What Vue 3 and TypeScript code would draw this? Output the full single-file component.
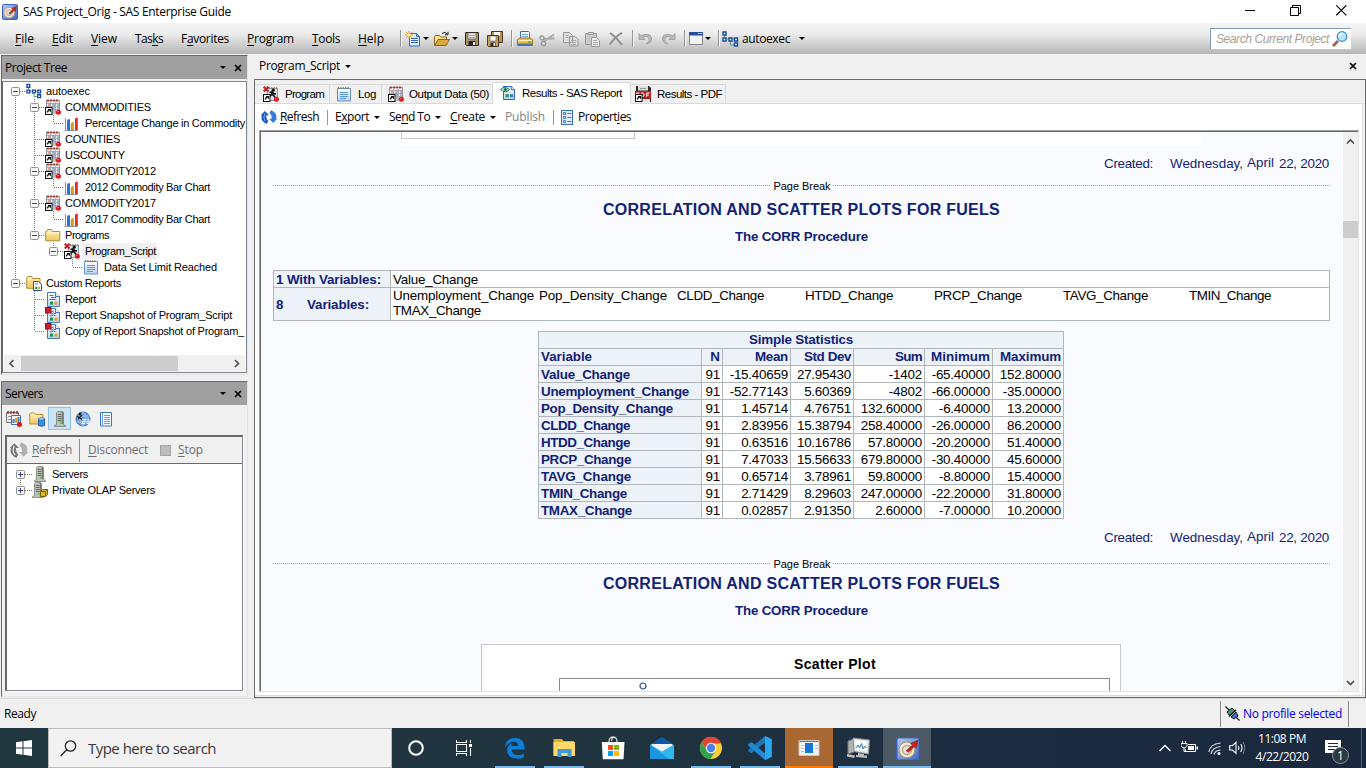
<script setup lang="ts">
interface TreeRow {
  guides: string[]
  icon: string
  text: string
  width: number
  selected?: boolean
}

/* Tracks a label so that it fills the given width in pixels. */
const vFit = {
  mounted(el: HTMLElement, binding: { value: number }) {
    const count = (el.textContent ?? '').trim().length
    const natural = el.getBoundingClientRect().width
    if (count > 1) el.style.letterSpacing = `${((binding.value - natural) / count).toFixed(3)}px`
  },
}

const menus = [
  { pre: '', key: 'F', post: 'ile', width: 19, cell: 37 },
  { pre: '', key: 'E', post: 'dit', width: 21, cell: 39 },
  { pre: '', key: 'V', post: 'iew', width: 26, cell: 44 },
  { pre: 'Tas', key: 'k', post: 's', width: 28, cell: 46 },
  { pre: 'F', key: 'a', post: 'vorites', width: 48, cell: 66 },
  { pre: '', key: 'P', post: 'rogram', width: 47, cell: 65 },
  { pre: '', key: 'T', post: 'ools', width: 28, cell: 46 },
  { pre: '', key: 'H', post: 'elp', width: 26, cell: 42 },
]

const tree: TreeRow[] = [
  { guides: ['first'], icon: 'proj', text: 'autoexec', width: 44 },
  { guides: ['v', 'teebox'], icon: 'table', text: 'COMMMODITIES', width: 86 },
  { guides: ['v', 'v', 'ell'], icon: 'chart', text: 'Percentage Change in Commodity', width: 160 },
  { guides: ['v', 'tee'], icon: 'table', text: 'COUNTIES', width: 55 },
  { guides: ['v', 'tee'], icon: 'table', text: 'USCOUNTY', width: 60 },
  { guides: ['v', 'teebox'], icon: 'table', text: 'COMMODITY2012', width: 91 },
  { guides: ['v', 'v', 'ell'], icon: 'chart', text: '2012 Commodity Bar Chart', width: 125 },
  { guides: ['v', 'teebox'], icon: 'table', text: 'COMMODITY2017', width: 91 },
  { guides: ['v', 'v', 'ell'], icon: 'chart', text: '2017 Commodity Bar Chart', width: 125 },
  { guides: ['v', 'ellbox'], icon: 'folder', text: 'Programs', width: 44 },
  { guides: ['v', 'none', 'ellbox'], icon: 'program', text: 'Program_Script', width: 71, selected: true },
  { guides: ['v', 'none', 'none', 'ell'], icon: 'note', text: 'Data Set Limit Reached', width: 113 },
  { guides: ['ellbox'], icon: 'folderreport', text: 'Custom Reports', width: 75 },
  { guides: ['none', 'tee'], icon: 'report', text: 'Report', width: 31 },
  { guides: ['none', 'tee'], icon: 'snap', text: 'Report Snapshot of Program_Script', width: 167 },
  { guides: ['none', 'ell'], icon: 'snap', text: 'Copy of Report Snapshot of Program_', width: 179 },
]

const tabs = [
  { id: 'program', icon: 'program', text: 'Program', width: 39 },
  { id: 'log', icon: 'note', text: 'Log', width: 18 },
  { id: 'output', icon: 'table', text: 'Output Data (50)', width: 80 },
  { id: 'sas', icon: 'result', text: 'Results - SAS Report', width: 100 },
  { id: 'pdf', icon: 'pdf', text: 'Results - PDF', width: 65 },
]

const variables = [
  { text: 'Unemployment_Change', width: 141 },
  { text: 'Pop_Density_Change', width: 128 },
  { text: 'CLDD_Change', width: 87 },
  { text: 'HTDD_Change', width: 88 },
  { text: 'PRCP_Change', width: 88 },
  { text: 'TAVG_Change', width: 85 },
  { text: 'TMIN_Change', width: 82 },
  { text: 'TMAX_Change', width: 88 },
]

const statHeads = [
  { text: 'Variable', width: 51 },
  { text: 'N', width: 9 },
  { text: 'Mean', width: 33 },
  { text: 'Std Dev', width: 47 },
  { text: 'Sum', width: 27 },
  { text: 'Minimum', width: 59 },
  { text: 'Maximum', width: 61 },
]

const stats = [
  { name: 'Value_Change', width: 89, values: ['91', '-15.40659', '27.95430', '-1402', '-65.40000', '152.80000'] },
  { name: 'Unemployment_Change', width: 148, values: ['91', '-52.77143', '5.60369', '-4802', '-66.00000', '-35.00000'] },
  { name: 'Pop_Density_Change', width: 132, values: ['91', '1.45714', '4.76751', '132.60000', '-6.40000', '13.20000'] },
  { name: 'CLDD_Change', width: 89, values: ['91', '2.83956', '15.38794', '258.40000', '-26.00000', '86.20000'] },
  { name: 'HTDD_Change', width: 89, values: ['91', '0.63516', '10.16786', '57.80000', '-20.20000', '51.40000'] },
  { name: 'PRCP_Change', width: 90, values: ['91', '7.47033', '15.56633', '679.80000', '-30.40000', '45.60000'] },
  { name: 'TAVG_Change', width: 90, values: ['91', '0.65714', '3.78961', '59.80000', '-8.80000', '15.40000'] },
  { name: 'TMIN_Change', width: 86, values: ['91', '2.71429', '8.29603', '247.00000', '-22.20000', '31.80000'] },
  { name: 'TMAX_Change', width: 91, values: ['91', '0.02857', '2.91350', '2.60000', '-7.00000', '10.20000'] },
]

const apps = [
  { icon: 'edge', state: 'open' },
  { icon: 'explorer', state: 'open' },
  { icon: 'store', state: '' },
  { icon: 'mail', state: '' },
  { icon: 'chrome', state: 'open' },
  { icon: 'vscode', state: 'open' },
  { icon: 'window', state: 'alert' },
  { icon: 'monitor', state: 'open' },
  { icon: 'sasbig', state: 'current' },
]
</script>

<template>
  <div class="desktop">
    <svg class="defs" width="0" height="0">
      <defs>
        <linearGradient id="g-blue" x1="0" y1="0" x2="1" y2="1">
          <stop offset="0" stop-color="#b9cdf3" /><stop offset="1" stop-color="#3b63c4" />
        </linearGradient>
        <linearGradient id="g-fold" x1="0" y1="0" x2="0" y2="1">
          <stop offset="0" stop-color="#fff3bd" /><stop offset="1" stop-color="#f0c45a" />
        </linearGradient>
        <linearGradient id="g-edge" x1="0" y1="0" x2="0" y2="1">
          <stop offset="0" stop-color="#ffffff" /><stop offset="1" stop-color="#bcd2f4" />
        </linearGradient>
      </defs>
      <symbol id="i-sas" viewBox="0 0 16 16">
        <rect x=".5" y=".5" width="15" height="15" rx="1.5" fill="url(#g-blue)" stroke="#3d62b4" />
        <circle cx="7.3" cy="8.6" r="5.3" fill="#f3e9d5" stroke="#a68c62" stroke-width=".6" />
        <circle cx="7.3" cy="8.6" r="3" fill="#dde3ec" stroke="#c0a673" stroke-width="1" />
        <path d="M6.8 9.2 L10.9 5.4 L9.6 4.4 L14.6 2.2 L13.7 7.4 L12.4 6.4 L8.2 10.2Z" fill="#c4241d" stroke="#8b1a14" stroke-width=".4" />
      </symbol>
      <symbol id="i-proj" viewBox="0 0 17 16">
        <path d="M2.5 4v4h10M8.5 10v4h4" fill="none" stroke="#5a9b79" />
        <path d="M1 1h3v3H1zM1 7h3v3H1zM7 7h3v3H7zM12.500 7h3v3h-3zM12.500 12h3v3h-3z" fill="#fff" stroke="#174a9c" stroke-width="1.4" />
      </symbol>
      <symbol id="i-short" viewBox="0 0 16 16">
        <rect x=".5" y="8.5" width="6.5" height="7" fill="#fff" stroke="#111" />
        <path d="M2.3 13.5q0-2 2.2-2.2M3 10.5h2.4v2.3" fill="none" stroke="#111" stroke-width="1.2" />
      </symbol>
      <symbol id="i-table" viewBox="0 0 16 16">
        <rect x="1.5" y="1.5" width="13" height="12.5" fill="#f7f4f0" stroke="#9a8f8c" />
        <path d="M2 1.5h12" stroke="#a53b3b" stroke-width="2" stroke-dasharray="2 1" />
        <path d="M2 4.500h12M2 7.5h12M2 10.5h12M5.5 3v11M10.500 3v11" stroke="#aaa6a7" />
        <path d="M7 6h3M12 6h2M7 9h3M12 9h2M8 12h2" stroke="#4d79cc" stroke-width="1.2" />
        <path d="M3 6h2" stroke="#c34d45" />
        <use href="#i-short" />
        <circle cx="13.4" cy="13.3" r="2.5" fill="#d9181c" /><circle cx="12.8" cy="12.6" r=".7" fill="#ff8d86" />
      </symbol>
      <symbol id="i-chart" viewBox="0 0 16 16">
        <path d="M1.5 3v12.5M.5 15.5H14" fill="none" stroke="#8994a8" />
        <path d="M3 5.5l1-1.3h2V15H3z" fill="#2d6fdb" />
        <path d="M7 9l1-1.5h1.5V15H7z" fill="#d5a419" stroke="#a77800" stroke-width=".4" />
        <path d="M11 4l1-1.3h1.8V14.5L13 15h-2z" fill="#e02b20" />
      </symbol>
      <symbol id="i-folder" viewBox="0 0 16 16">
        <path d="M.7 4.5h.8l1-2h4l1 2h7.3v9.3H.7z" fill="url(#g-fold)" stroke="#b68a2d" />
        <path d="M2 6h12" stroke="#fff9df" />
      </symbol>
      <symbol id="i-folderreport" viewBox="0 0 16 16">
        <path d="M.7 3.5l1-2h4l1 2h7.3v9.8H.7z" fill="url(#g-fold)" stroke="#b68a2d" />
        <path d="M7.5 6.5h5l3 3v6h-8z" fill="#fff" stroke="#214da5" />
        <path d="M9 9h3" stroke="#5e89ce" /><path d="M9 13h2.3" stroke="#32a052" stroke-width="2.5" /><path d="M11.8 13h2.3" stroke="#d6aa22" stroke-width="2.5" />
      </symbol>
      <symbol id="i-report" viewBox="0 0 16 16">
        <path d="M2.5 1.5h8l4 4v10h-12z" fill="url(#g-edge)" stroke="#4675c8" />
        <path d="M10.5 1.5v4h4" fill="#fff" stroke="#4675c8" />
        <path d="M4.500 4.500h4M6 6.5h5M4.500 8.500h6" stroke="#4675ad" />
        <path d="M5 12.2h3" stroke="#199445" stroke-width="3" /><path d="M9.5 12.2h3" stroke="#d8a321" stroke-width="3" />
      </symbol>
      <symbol id="i-snap" viewBox="0 0 16 16">
        <use href="#i-report" />
        <path d="M6 3v7M8.5 3v6" stroke="#aab8d3" stroke-width="1.5" />
        <rect x=".5" y=".5" width="5.5" height="5.5" fill="#c7222b" stroke="#9d111b" />
      </symbol>
      <symbol id="i-note" viewBox="0 0 16 16">
        <path d="M1.5 2.5h13v12.5h-13z" fill="url(#g-edge)" stroke="#5f91cf" />
        <path d="M2 2h12" stroke="#827c4c" stroke-width="2" stroke-dasharray="1 1.4" />
        <path d="M4 6.5h8M4 8.5h8M4 10.5h8M4 12.5h6" stroke="#5996da" />
      </symbol>
      <symbol id="i-program" viewBox="0 0 16 16">
        <path d="M4.5 2.5h10v12h-10z" fill="#dbe7f5" stroke="#8b98a7" />
        <path d="M6 2h9" stroke="#858044" stroke-width="2" stroke-dasharray="1 1.4" />
        <circle cx="10.2" cy="4.2" r="1.6" fill="#111" />
        <path d="M9.5 5.5L8.3 9l-2 1.5M9.2 8.3l2.3 2.2 1 2.5M6.5 6.5l2.5-.7 2 2 2 .1" stroke="#111" stroke-width="1.6" fill="none" />
        <path d="M.7.7l4.8 4.8M5.5.7L.7 5.5" stroke="#c22020" stroke-width="2.1" />
        <use href="#i-short" />
        <circle cx="13.4" cy="13.3" r="2.5" fill="#d9181c" /><circle cx="12.8" cy="12.6" r=".7" fill="#ff8d86" />
      </symbol>
      <symbol id="i-result" viewBox="0 0 16 16">
        <path d="M3.5 1.5h8l3 3v10h-11z" fill="url(#g-edge)" stroke="#2d65c7" />
        <path d="M11.3 1.5v3.2h3.2" fill="#fff" stroke="#2d65c7" />
        <path d="M.5 4.5q4-4 9 0q-4 4.5-9 0z" fill="#d8efdf" stroke="#1d794f" /><circle cx="5.3" cy="4.5" r="1.6" fill="#187c5c" />
        <path d="M5.5 10.7h3.3" stroke="#2d9e47" stroke-width="3.2" /><path d="M10 10.7h3" stroke="#3373cb" stroke-width="3" />
      </symbol>
      <symbol id="i-pdf" viewBox="0 0 16 16">
        <path d="M1 0h13l2 2V16H1z" fill="#29292b" />
        <path d="M3 0h10v4.500H3z" fill="#e1e1e1" /><path d="M5 2.500h6" stroke="#999" />
        <path d="M0 5h16v7.500H0z" fill="#d9141b" />
        <path d="M1.700 11V7h2q1 1.100 0 2.200h-2M6.600 7v3.500h1.600q2-1.700 0-3.500zM11.500 11V7h3M11.500 9h2.300" fill="none" stroke="#fff" stroke-width="1" />
        <path d="M7 13h8v3H7z" fill="#ddd" />
        <use href="#i-short" />
      </symbol>
      <symbol id="i-refresh" viewBox="0 0 16 16">
        <path d="M5.600 15Q-.9 12 .9 6.300H-.3L3.900 2L8 6.300H5.400Q4.800 9.800 7.300 12z" fill="#1c55b8" />
        <path d="M10 1.200Q16.900 4 15.100 9.700H16.300L12.100 14L8 9.700H10.600Q11.200 6.200 8.400 4z" fill="#347fd6" />
        <path d="M3.800 4.500Q1.500 9 4.500 12.500" stroke="#77aff0" fill="none" />
      </symbol>
      <symbol id="i-props" viewBox="0 0 12 15">
        <rect x=".5" y=".5" width="11" height="14" fill="#dfeafb" stroke="#376db9" />
        <path d="M2.5 2.500h2v2h-2zM2.5 6.500h2v2h-2zM2.5 10.500h2v2h-2z" fill="#fff" stroke="#2959ac" stroke-width=".8" />
        <path d="M6.300 3.500h4M6.300 7.500h4M6.300 11.500h4" stroke="#3974c4" />
      </symbol>
      <symbol id="i-server" viewBox="0 0 16 16">
        <path d="M4.5 1.5l1-1h5l1 1v12l2 1v1h-11v-1l2-1z" fill="#bfc2ba" stroke="#787c74" stroke-width=".8" />
        <path d="M5.8 3.500h3.7M5.8 5.500h3.7M5.8 7.500h3.7M5.8 9.500h3.7" stroke="#5c6559" /><path d="M10.500 1v12" stroke="#73796f" stroke-width="1.4" />
        <circle cx="8.7" cy="11.8" r=".9" fill="#34c33b" />
      </symbol>
      <symbol id="i-olap" viewBox="0 0 16 16">
        <g transform="translate(-2 0)"><use href="#i-server" /></g>
        <path d="M8.500 9.500l2-2h5v5l-2 2h-5z" fill="#e0b81e" stroke="#71620b" /><path d="M8.500 9.500h5v5M13.500 9.500l2-2" stroke="#4a7b27" fill="none" />
      </symbol>
    </svg>

    <header class="titlebar">
      <svg class="app-icon"><use href="#i-sas" /></svg>
      <span v-fit="208" class="fit">SAS Project_Orig - SAS Enterprise Guide</span>
      <div class="win-controls">
        <svg viewBox="0 0 11 11"><path d="M0 5.5h10" stroke="#000" /></svg>
        <svg viewBox="0 0 11 11"><path d="M.5 2.5h8v8h-8zM2.5 2.5v-2h8v8h-2" fill="none" stroke="#000" /></svg>
        <svg viewBox="0 0 11 11"><path d="M.3.3l10 10M10.3.3l-10 10" stroke="#000" stroke-width="1.1" /></svg>
      </div>
    </header>

    <div class="menubar">
      <nav class="menus">
        <div v-for="m in menus" :key="m.key + m.post" class="menu" :style="{ width: m.cell + 'px' }">
          <span v-fit="m.width" class="fit">{{ m.pre }}<u>{{ m.key }}</u>{{ m.post }}</span>
        </div>
      </nav>
      <div class="tools">
        <i class="sep" />
        <svg class="t-new" viewBox="0 0 16 16">
          <path d="M4.5 2.5h7l3 3v9.500h-10z" fill="#dfecfc" stroke="#3569bb" /><path d="M11.500 2.500v3h3M6 7.500h7M6 9.500h7M6 11.500h7" fill="none" stroke="#3569bb" />
          <path d="M4 0v8M0 4h8M1 1l6 6M7 1L1 7" stroke="#f09a27" /><circle cx="4" cy="4" r="1.600" fill="#fff4a5" />
        </svg>
        <b class="arrow" />
        <svg class="t-open" viewBox="0 0 16 16">
          <path d="M.5 14.500v-9l1-1h4l1 1.500h6v3" fill="#ffe695" stroke="#8a651b" /><path d="M.7 14.500l3.300-6h11.500l-3.500 6z" fill="#dda83c" stroke="#8a651b" />
          <path d="M8 2.500q3-2.500 5.500.5M14 .8v3h-3" fill="none" stroke="#222" />
        </svg>
        <b class="arrow" />
        <svg class="t-save" viewBox="0 0 14 14">
          <path d="M.5.5h13v13H1.500l-1-1z" fill="#a9946f" stroke="#2c261f" /><path d="M3 1h8v6H3z" fill="#f7f7f7" stroke="#4b4338" stroke-width=".6" /><path d="M4 3.500h6M4 5.500h6" stroke="#999" /><path d="M3.500 9h7v4.500h-7z" fill="#282421" /><path d="M8 10h2v3H8z" fill="#eee" />
        </svg>
        <svg class="t-saveall" viewBox="0 0 16 16">
          <path d="M4.500.5h11v11h-11z" fill="#b79450" stroke="#453721" /><path d="M7 1h6v4H7z" fill="#fff" /><path d="M.5 4.500h11v11h-10l-1-1z" fill="#c4a265" stroke="#453721" /><path d="M3 5h6v5H3z" fill="#fff" stroke="#453721" stroke-width=".5" /><path d="M3.500 11.500h5v4h-5z" fill="#332b20" /><path d="M6.500 12h1.500v3H6.500z" fill="#eee" />
        </svg>
        <i class="sep s-print" />
        <svg class="t-print" viewBox="0 0 16 16">
          <path d="M3.500 8V.5h8l1 1V8" fill="#f3f8ff" stroke="#3c6bb8" /><path d="M5 3.500h6M5 5.500h6" stroke="#77a2de" /><path d="M.5 9l2-2h11l2 2v5.500H.5z" fill="#e9bd48" stroke="#9c742a" /><path d="M1 9.500h14" stroke="#fff0a5" /><path d="M1 12.500h14v2H1z" fill="#4371b6" /><path d="M11 11h3" stroke="#289c32" />
        </svg>
        <svg class="t-cut" viewBox="0 0 16 16">
          <path d="M15 3.500L5.500 10M15.500 7.500L5 8" stroke="#aaa" stroke-width="2" /><circle cx="3" cy="7" r="2" fill="none" stroke="#999" stroke-width="1.300" /><circle cx="4.500" cy="12.500" r="2.200" fill="none" stroke="#999" stroke-width="1.300" />
        </svg>
        <svg class="t-copy" viewBox="0 0 16 16">
          <path d="M.5 1.500h6l3 3v7h-9zM6.500 5.500h5.500l3 3v6.500H6.500z" fill="#ddd" stroke="#999" /><path d="M2.500 4.500h3M2.500 6.500h3M8 9.500h5M8 11.500h5M8 13.500h5" stroke="#aaa" />
        </svg>
        <svg class="t-paste" viewBox="0 0 16 16">
          <path d="M.5 2.500h11v11H.5z" fill="#c9c9c9" stroke="#999" /><path d="M3.500 3.500v-2h5v2z" fill="#ddd" stroke="#999" /><path d="M6.500 6.500h5l3 3v6h-8z" fill="#eee" stroke="#999" /><path d="M8 9.500h4M8 11.500h5M8 13.500h5" stroke="#aaa" />
        </svg>
        <svg class="t-del" viewBox="0 0 14 14"><path d="M1 1q6 4 12 12M13 .7Q6 5 .7 12.500" fill="none" stroke="#8f8f8f" stroke-width="2" /></svg>
        <i class="sep s-undo" />
        <svg class="t-undo" viewBox="0 0 16 14"><path d="M1 1.500v6h6L4.900 5.500Q10 3 11 6.500T8 12q6-1 5.500-6Q12 0 3.200 3.700z" fill="#bbb" stroke="#999" stroke-width=".8" /></svg>
        <svg class="t-redo" viewBox="0 0 16 14"><path d="M15 1.500v6H9L11.100 5.500Q6 3 5 6.500T8 12q-6-1-5.500-6Q4 0 12.800 3.700z" fill="#bbb" stroke="#999" stroke-width=".8" /></svg>
        <i class="sep s-win" />
        <svg class="t-win" viewBox="0 0 14 14"><path d="M.5.5h13v12H.5z" fill="#f3f3f3" stroke="#888" /><path d="M0 0h14v3.500H0z" fill="#284e9b" /><path d="M9 1.500h4" stroke="#fff" stroke-dasharray="1 .5" /></svg>
        <b class="arrow" />
        <i class="sep s-proj" />
        <svg class="t-proj"><use href="#i-proj" /></svg>
        <span v-fit="48" class="fit">autoexec</span>
        <b class="arrow a-last" />
      </div>
      <div class="search">
        <em v-fit="113" class="fit">Search Current Project</em>
        <svg viewBox="0 0 16 16"><path d="M1 15l5-5" stroke="#a55d48" stroke-width="2.700" /><circle cx="10" cy="5.500" r="4.800" fill="#b9e4fb" stroke="#4b8bd5" stroke-width="1.300" /><path d="M7 5q1-3 4-2.500" stroke="#fff" stroke-width="1.400" fill="none" /></svg>
      </div>
    </div>

    <main class="main">
      <aside class="side">
        <section class="pane project">
          <div class="pane-head"><span v-fit="62" class="fit">Project Tree</span><b class="arrow" /><svg class="x" viewBox="0 0 8 8"><path d="M1 1l6 6M7 1L1 7" stroke="#000" stroke-width="1.700" /></svg></div>
          <div class="tree-box">
            <div class="tree">
              <div v-for="row in tree" :key="row.text" class="row">
                <svg v-for="(g, i) in row.guides" :key="i" class="guide" viewBox="0 0 19 16">
                  <g fill="none" stroke="#777" stroke-dasharray="1 1">
                    <path v-if="g === 'v' || g === 'tee' || g === 'teebox'" d="M9.500 0v16" />
                    <path v-if="g === 'ell' || g === 'ellbox'" d="M9.500 0v8" />
                    <path v-if="g === 'first'" d="M9.500 8v8" />
                    <path v-if="g !== 'v' && g !== 'none'" d="M10 8.500h9" />
                  </g>
                  <g v-if="g.endsWith('box') || g === 'first'">
                    <rect x="5.500" y="4.500" width="8" height="8" rx="1" fill="#f6f6f6" stroke="#919191" /><path d="M7 8.500h5" stroke="#31479b" />
                  </g>
                </svg>
                <svg class="node"><use :href="'#i-' + row.icon" /></svg>
                <span class="label" :class="{ selected: row.selected, deep: row.guides.length > 2 }"><span v-fit="row.width" class="fit">{{ row.text }}</span></span>
              </div>
            </div>
            <div class="hscroll">
              <svg viewBox="0 0 8 9"><path d="M5.500 1L2 4.500L5.500 8" fill="none" stroke="#505050" stroke-width="1.700" /></svg>
              <div class="thumb" />
              <svg class="right" viewBox="0 0 8 9"><path d="M2 1l3.500 3.500L2 8" fill="none" stroke="#505050" stroke-width="1.700" /></svg>
            </div>
          </div>
        </section>

        <section class="pane servers">
          <div class="pane-head"><span v-fit="38" class="fit">Servers</span><b class="arrow" /><svg class="x" viewBox="0 0 8 8"><path d="M1 1l6 6M7 1L1 7" stroke="#000" stroke-width="1.700" /></svg></div>
          <div class="server-icons">
            <div><svg viewBox="0 0 16 16"><path d="M.5 1.500h12v10H.5z" fill="#eee" stroke="#777" /><path d="M1 1.500h11" stroke="#a43434" stroke-width="2.400" stroke-dasharray="2 1" /><path d="M2 5.500h3M2 8.500h3" stroke="#999" /><path d="M5.500 4.500h9v9h-9z" fill="#fff" stroke="#466eb6" /><path d="M7.500 12V8M12.500 12V6" stroke="#347bd2" stroke-width="2" /><path d="M10 12V7" stroke="#dc9c2a" stroke-width="2" /><circle cx="13.500" cy="13.500" r="2.500" fill="#d8181c" /></svg></div>
            <div><svg viewBox="0 0 16 16"><path d="M.7 13V3l1-1h4l1 1.500h7.300v9.500z" fill="url(#g-fold)" stroke="#bd9031" /><path d="M9.500 8v6.500q3 1.500 6 0V8z" fill="#3c91e0" stroke="#1b5eb2" /><ellipse cx="12.500" cy="8" rx="3" ry="1.300" fill="#a9d9fa" stroke="#1b5eb2" stroke-width=".7" /></svg></div>
            <div class="on"><svg><use href="#i-server" /></svg></div>
            <div><svg viewBox="0 0 16 16"><circle cx="8" cy="8" r="7" fill="#6f9fe0" stroke="#3672bc" /><path d="M1.500 5h13M1.500 11h13M8 1q-6 7 0 14M8 1q6 7 0 14" fill="none" stroke="#b9d5f5" stroke-width=".7" /><circle cx="5" cy="3" r="1.500" fill="#222" /><path d="M2 5l5 3.500M7 4L3 8" stroke="#222" stroke-width="1.200" /><path d="M7.500 8.500H10v2H7.500v2H10M11.500 8.500H14v4h-2.500M11.500 10.500h2" fill="none" stroke="#fff" /></svg></div>
            <div><svg viewBox="0 0 16 16"><path d="M2.500 1.500h11v13.500h-11z" fill="#f4f9ff" stroke="#3c75c4" /><path d="M4.500 2v13M6 4.500h6M6 6.500h6M6 8.500h6M6 10.500h6M6 12.500h6" stroke="#6c9edd" /></svg></div>
          </div>
          <div class="server-box">
            <div class="server-tools">
              <svg class="gray-refresh"><use href="#i-refresh" /></svg>
              <span v-fit="40" class="fit"><u>R</u>efresh</span><i />
              <span v-fit="60" class="fit"><u>D</u>isconnect</span>
              <b class="stop" /><span v-fit="25" class="fit"><u>S</u>top</span>
            </div>
            <div class="server-tree">
              <div class="srow"><svg class="plus" viewBox="0 0 18 16"><path d="M5.500 12v4M10 8.500h7" fill="none" stroke="#777" stroke-dasharray="1 1" /><rect x="1.500" y="4.500" width="8" height="8" rx="1" fill="#f6f6f6" stroke="#919191" /><path d="M3 8.500h5M5.500 6v5" stroke="#31479b" /></svg><svg class="node"><use href="#i-server" /></svg><span v-fit="36" class="fit">Servers</span></div>
              <div class="srow"><svg class="plus" viewBox="0 0 18 16"><path d="M5.500 0v4M10 8.500h7" fill="none" stroke="#777" stroke-dasharray="1 1" /><rect x="1.500" y="4.500" width="8" height="8" rx="1" fill="#f6f6f6" stroke="#919191" /><path d="M3 8.500h5M5.500 6v5" stroke="#31479b" /></svg><svg class="node"><use href="#i-olap" /></svg><span v-fit="103" class="fit">Private OLAP Servers</span></div>
            </div>
          </div>
        </section>
      </aside>

      <section class="work">
        <div class="work-head"><span v-fit="81" class="fit">Program_Script</span><b class="arrow" /><svg class="x" viewBox="0 0 8 8"><path d="M1 1l6 6M7 1L1 7" stroke="#000" stroke-width="1.700" /></svg></div>
        <div class="doc">
          <div class="tabs">
            <div v-for="t in tabs" :key="t.id" class="tab" :class="t.id"><svg><use :href="'#i-' + t.icon" /></svg><span v-fit="t.width" class="fit">{{ t.text }}</span></div>
            <div class="tab-rest" />
          </div>
          <div class="panel">
            <div class="panel-tools">
              <svg class="p-refresh"><use href="#i-refresh" /></svg>
              <span v-fit="39" class="fit"><u>R</u>efresh</span><i class="psep" />
              <span v-fit="34" class="fit">E<u>x</u>port</span><b class="arrow" />
              <span v-fit="41" class="fit">Se<u>n</u>d To</span><b class="arrow" />
              <span v-fit="35" class="fit"><u>C</u>reate</span><b class="arrow" />
              <span v-fit="40" class="fit off">Pub<u>l</u>ish</span><i class="psep" />
              <svg class="p-props"><use href="#i-props" /></svg>
              <span v-fit="53" class="fit">Propert<u>i</u>es</span>
            </div>
            <div class="viewer">
              <div class="report">
                <div class="remnant"><div /></div>
                <div class="created"><span v-fit="49" class="fit">Created:</span><span v-fit="73" class="fit day">Wednesday,</span><span v-fit="27" class="fit april">April</span><span v-fit="50" class="fit">22, 2020</span></div>
                <div class="break"><span v-fit="57" class="fit">Page Break</span></div>
                <h1 class="first"><span v-fit="397" class="fit">CORRELATION AND SCATTER PLOTS FOR FUELS</span></h1>
                <h2><span v-fit="133" class="fit">The CORR Procedure</span></h2>
                <table class="vars">
                  <colgroup><col class="c-head"><col></colgroup>
                  <tbody>
                    <tr class="low"><th><span v-fit="105" class="fit">1 With Variables:</span></th><td><span v-fit="85" class="fit">Value_Change</span></td></tr>
                    <tr class="tall"><th><span class="eight">8</span><span v-fit="62" class="fit">Variables:</span></th><td><div class="var-grid"><span v-for="v in variables" :key="v.text"><span v-fit="v.width" class="fit">{{ v.text }}</span></span></div></td></tr>
                  </tbody>
                </table>
                <table class="stats">
                  <colgroup><col class="w163"><col class="w21"><col class="w68"><col class="w63"><col class="w71"><col class="w68"><col class="w71"></colgroup>
                  <tbody>
                    <tr><th colspan="7" class="mid"><span v-fit="104" class="fit">Simple Statistics</span></th></tr>
                    <tr class="heads"><th v-for="h in statHeads" :key="h.text"><span v-fit="h.width" class="fit">{{ h.text }}</span></th></tr>
                    <tr v-for="s in stats" :key="s.name" class="low"><th><span v-fit="s.width" class="fit">{{ s.name }}</span></th><td v-for="(v, i) in s.values" :key="i">{{ v }}</td></tr>
                  </tbody>
                </table>
                <div class="created"><span v-fit="49" class="fit">Created:</span><span v-fit="73" class="fit day">Wednesday,</span><span v-fit="27" class="fit april">April</span><span v-fit="50" class="fit">22, 2020</span></div>
                <div class="break second"><span v-fit="57" class="fit">Page Break</span></div>
                <h1><span v-fit="397" class="fit">CORRELATION AND SCATTER PLOTS FOR FUELS</span></h1>
                <h2><span v-fit="133" class="fit">The CORR Procedure</span></h2>
                <div class="plot">
                  <h3><span v-fit="82" class="fit">Scatter Plot</span></h3>
                  <div class="plot-area"><svg viewBox="0 0 8 8"><circle cx="4" cy="4" r="3" fill="none" stroke="#2a4a8c" stroke-width="1.200" /></svg></div>
                </div>
              </div>
              <div class="vscroll">
                <svg viewBox="0 0 9 8"><path d="M1 5.500L4.500 2L8 5.500" fill="none" stroke="#505050" stroke-width="1.700" /></svg>
                <div class="thumb" />
                <svg class="down" viewBox="0 0 9 8"><path d="M1 2l3.500 3.500L8 2" fill="none" stroke="#505050" stroke-width="1.700" /></svg>
              </div>
            </div>
          </div>
        </div>
      </section>
    </main>

    <footer class="status">
      <span v-fit="32" class="fit">Ready</span>
      <div class="profile">
        <svg viewBox="0 0 15 15"><path d="M.5.500l4 4M11 11l3.500 3.500" stroke="#111" stroke-width="1.200" /><path d="M2 6l5-4 3 3-5 5z" fill="#3e9c7c" stroke="#111" /><path d="M6 11l5-5 2 4-4 3z" fill="#3e6fc4" stroke="#111" /><path d="M4 10.500L11 4" stroke="#111" stroke-width="1.500" /></svg>
        <span v-fit="99" class="fit">No profile selected</span>
      </div>
    </footer>

    <div class="taskbar">
      <div class="start"><svg viewBox="0 0 16 16"><path d="M0 2.300L6.500 1.300V7.500H0zM7.500 1.200L16 0V7.500H7.500zM0 8.500h6.500v6.200L0 13.800zM7.500 8.500H16V16L7.500 14.800z" fill="#fff" /></svg></div>
      <div class="type-here"><svg viewBox="0 0 17 17"><circle cx="10.500" cy="6" r="5.200" fill="none" stroke="#222" stroke-width="1.300" /><path d="M6.700 9.800L.6 16" stroke="#222" stroke-width="1.300" /></svg><span v-fit="128" class="fit">Type here to search</span></div>
      <div class="round"><svg viewBox="0 0 18 18"><circle cx="9" cy="9" r="6.800" fill="none" stroke="#fff" stroke-width="2" /></svg></div>
      <div class="taskview"><svg viewBox="0 0 17 16"><path d="M.5 0v2.500h10V0M.5 16v-2.500h10V16M.5 4.500h10v7H.5zM14.500 0v3M14.500 8v8" fill="none" stroke="#fff" stroke-width="1.100" /><path d="M13 4h3v3h-3z" fill="#fff" /></svg></div>
      <div class="apps">
        <div v-for="a in apps" :key="a.icon" class="app" :class="a.state">
          <svg v-if="a.icon === 'edge'" viewBox="0 0 24 24"><path d="M2 11.500Q3.500 1.500 12.500 1.700Q22 2.500 21.800 13.500H8.400Q9 19 15 19q3 0 5.800-1.600v4Q17.500 23 14.500 22.800Q4.500 22.500 4 14Q4.200 9.500 9 7.300Q8.300 9 8.300 10h6.900q0-4-4.200-4.200Q5.500 5.800 2 11.500z" fill="#0b7edb" /></svg>
          <svg v-else-if="a.icon === 'explorer'" viewBox="0 0 24 24"><path d="M1.500 3h8.500l1.500 2H22v14H1.500z" fill="#e9ab24" /><path d="M1.500 6H23v14H1.500z" fill="#ffd869" /><path d="M5.500 21v-8h14v8h-4v-4h-6v4z" fill="#409ad7" /></svg>
          <svg v-else-if="a.icon === 'store'" viewBox="0 0 24 24"><path d="M8 7q-.5-6 4-6t4 6M10.500 5q.5-5 4-3" fill="none" stroke="#ddd" stroke-width="1.300" /><path d="M.8 6h22.700l-1 17.200H1.800z" fill="#fff" /><path d="M7 9h5v5H7z" fill="#f25022" /><path d="M13 9h5v5h-5z" fill="#7fba00" /><path d="M7 15h5v5H7z" fill="#00a4ef" /><path d="M13 15h5v5h-5z" fill="#ffb900" /></svg>
          <svg v-else-if="a.icon === 'mail'" viewBox="0 0 24 24"><path d="M0 8.500L12 1l12 7.500z" fill="#0e5aa7" /><path d="M1.500 8h21v8h-21z" fill="#f0f4f8" /><path d="M0 8.500l12 7L24 8.500V23H0z" fill="#30b8ee" /><path d="M0 8.500L19 23H0z" fill="#1b95df" /></svg>
          <svg v-else-if="a.icon === 'chrome'" viewBox="0 0 24 24"><circle cx="12" cy="12" r="11" fill="#f9cf38" /><path d="M2.500 6.500A11 11 0 0 1 22.200 7.500H12L8 14z" fill="#e34335" /><path d="M2.500 6.500A11 11 0 0 0 11.500 23L16.500 14.500H8z" fill="#31a350" /><circle cx="12" cy="12" r="5.200" fill="#fff" /><circle cx="12" cy="12" r="4.200" fill="#4b82ee" /></svg>
          <svg v-else-if="a.icon === 'vscode'" viewBox="0 0 24 24"><path d="M17 0v6.500L3.500 17.300L.2 15.200V14z" fill="#1d78b8" /><path d="M.2 8l3.300-2L17 17.500V24L.2 9.500z" fill="#1e8cd4" /><path d="M17 0l6.800 3v18L17 24z" fill="#27a8f0" /></svg>
          <svg v-else-if="a.icon === 'window'" viewBox="0 0 24 24"><path d="M2 4.500h20v15H2z" fill="#f2f2f2" stroke="#c7c7c7" /><path d="M2.500 5.500h19" stroke="#777" stroke-width="1" /><path d="M8 7h8v10H8z" fill="#1676d5" /><path d="M4 9.500h3M4 12.500h3M4 15.500h3M18 9.500h3M18 12.500h3" stroke="#c4c4c4" /></svg>
          <svg v-else-if="a.icon === 'monitor'" viewBox="0 0 24 24"><path d="M2 5l6-2v13l-6 2z" fill="#aeb3b3" stroke="#777" /><path d="M7 2l16.500 2-1 14L8 15.500z" fill="#dfe2e2" stroke="#8b9192" /><path d="M9 4l12.500 1.500-.8 10L10 14z" fill="#fff" /><path d="M10 12l2-3 1.500 3 2-4.500 1.500 5.500 2-3 1.500 2" fill="none" stroke="#2b77af" /><path d="M12 17l6 1v1.500h3V22l-11-1v-2h2z" fill="#b8bcbc" /><path d="M1 18l8 1.500-1 2.500-7-1.500z" fill="#bdc0c0" /></svg>
          <svg v-else viewBox="0 0 24 24"><svg x="1" y="1" width="22" height="22"><use href="#i-sas" /></svg></svg>
        </div>
      </div>
      <div class="tray">
        <svg class="chev" viewBox="0 0 12 8"><path d="M.5 7L6 1.500L11.500 7" fill="none" stroke="#fff" stroke-width="1.300" /></svg>
        <svg class="batt" viewBox="0 0 17 14"><path d="M7 3.500h7.500v7H4.500V8M1.500 0v2M4.500 0v2M0 2.500h6v2q-1 2.500-3 2.500t-3-2.500zM3 7v3.500h2" fill="none" stroke="#fff" stroke-width="1" /><path d="M7 5h6v4H7zM15.500 5.500h1.500v3h-1.500z" fill="#fff" /></svg>
        <svg class="wifi" viewBox="0 0 13 13"><path d="M.8 10Q2 2 12.500 1M3 12Q4 5.500 12.500 4.500M6 12.500Q7 8.500 12.500 8" fill="none" stroke="#ddd" stroke-width="1.200" /><circle cx="11" cy="11.500" r="1.500" fill="#fff" /></svg>
        <svg class="vol" viewBox="0 0 17 14"><path d="M.7 4.700h2.700L7 1.300v11L3.400 9H.7zM9.300 5q1.300 1.800 0 4M11.700 3q2.500 3.500 0 8" fill="none" stroke="#fff" stroke-width="1.100" /><path d="M14 1q3.500 5 0 12" fill="none" stroke="#7b8794" /></svg>
        <div class="clock"><span v-fit="48" class="fit">11:08 PM</span><span v-fit="53" class="fit">4/22/2020</span></div>
        <div class="notice"><svg viewBox="0 0 17 16"><path d="M0 0h16v13h-5l-3 3v-3H0z" fill="#fff" /><path d="M3 3.500h10M3 6.500h10M3 9.500h7" stroke="#1b2a3e" /></svg><span class="badge">1</span></div>
        <i class="show-desktop" />
      </div>
    </div>
  </div>
</template>

<style>
body { margin: 0; overflow: hidden; }
</style>

<style scoped>
.desktop { width: 1366px; height: 768px; overflow: hidden; display: flex; flex-direction: column; background: #f0f0f0; color: #000; font: 12px/16px "Open Sans", "Noto Sans", sans-serif; }
.desktop, .desktop * { box-sizing: border-box; }
.defs { position: absolute; }
svg { display: block; flex: none; }
.fit { display: inline-block; flex: none; white-space: pre; }
u { text-decoration: underline; text-underline-offset: 2px; text-decoration-thickness: 1px; text-decoration-skip-ink: none; }
.arrow { flex: none; width: 0; height: 0; border: 3px solid transparent; border-top-color: #000; border-bottom: 0; }
.x { width: 8px; height: 8px; }

.titlebar { height: 23px; flex: none; background: #fff; display: flex; align-items: center; padding-left: 2px; }
.app-icon { width: 16px; height: 16px; margin-right: 5px; }
.win-controls { margin-left: auto; display: flex; gap: 35px; padding-right: 19px; margin-top: -3px; }
.win-controls svg { width: 11px; height: 11px; }
.win-controls svg:first-child { margin-right: -1px; }

.menubar { height: 31px; flex: none; display: flex; background: linear-gradient(#f4f4f4, #ececec 35%, #b6b6b6); align-items: center; }
.menus { display: flex; padding-left: 15px; width: 400px; }
.menu { flex: none; }
.tools { display: flex; align-items: center; height: 31px; }
.tools svg { width: 16px; height: 16px; }
.sep { width: 1px; height: 17px; background: #979797; box-shadow: 1px 0 #f5f5f5; }
.tools .t-new { margin: 0 2px 0 4px; }
.tools .t-open { margin: 0 2px 0 5px; }
.tools .t-save { width: 14px; height: 14px; margin-left: 7px; }
.tools .t-saveall { margin-left: 8px; }
.s-print { margin: 0 5px 0 8px; }
.tools .t-cut { margin-left: 6px; }
.tools .t-copy { margin-left: 8px; }
.tools .t-paste { margin-left: 6px; }
.tools .t-del { width: 14px; height: 14px; margin-left: 8px; }
.s-undo { margin: 0 5px 0 9px; }
.tools .t-undo { height: 14px; }
.tools .t-redo { height: 14px; margin-left: 6px; }
.s-win { margin: 0 4px 0 8px; }
.tools .t-win { width: 14px; height: 14px; margin-right: 2px; }
.s-proj { margin: 0 3px 0 7px; }
.tools .t-proj { width: 17px; margin-right: 3px; }
.a-last { margin-left: 9px; }
.search { margin-left: auto; margin-right: 15px; width: 141px; height: 21px; background: #fff; border: 1px solid #7f9db9; border-right: 0; border-bottom: 0; display: flex; align-items: center; padding-left: 5px; gap: 3px; color: #a6a193; font: italic 12px/16px "Liberation Sans", Arial, sans-serif; }
.search svg { width: 16px; height: 16px; }

.main { height: 644px; flex: none; display: flex; }
.side { width: 249px; flex: none; display: flex; flex-direction: column; gap: 6px; padding: 1px 1px 1px 1px; }
.pane { border: 1px solid #696969; border-right-color: #e3e3e3; border-bottom-color: #e3e3e3; }
.project { height: 320px; flex: none; }
.pane-head { height: 23px; background: #a0a0a0; display: flex; align-items: center; padding: 0 5px 0 3px; }
.pane-head .arrow { margin-left: auto; margin-right: 8px; }
.tree-box { margin-top: 2px; height: 292px; border: 1px solid #828790; border-left-color: #696969; background: #fff; display: flex; flex-direction: column; }
.tree { flex: 1; overflow: hidden; padding: 1px 0 0 3px; font: 11px/16px "Liberation Sans", Arial, sans-serif; }
.row { height: 16px; display: flex; }
.guide { width: 19px; height: 16px; }
.node { width: 16px; height: 16px; margin: 0 2px 0 1px; }
.label { padding-left: 2px; height: 16px; }
.label.deep { padding-left: 3px; }
.label.selected { background: #f0f0f0; padding-right: 1px; }
.hscroll { height: 17px; margin: 0 1px; background: #f0f0f0; display: flex; align-items: center; padding: 0 4px; }
.hscroll svg { width: 8px; height: 9px; }
.hscroll .thumb { width: 157px; height: 15px; background: #cdcdcd; margin-left: 5px; }
.hscroll .right { margin-left: auto; }

.servers { flex: 1; }
.server-icons { height: 30px; display: flex; padding: 2px 0 0 0; }
.server-icons div { width: 23px; height: 23px; display: grid; place-items: center; border: 1px solid transparent; }
.server-icons .on { background: #cce4f7; border-color: #92c2e8; }
.server-icons svg { width: 16px; height: 16px; }
.server-box { margin: 0 4px 0 3px; height: 256px; border: 2px solid #a0a0a0; border-top-color: #696969; border-left-color: #696969; border-right: 1px solid #828790; border-bottom: 1px solid #828790; display: flex; flex-direction: column; box-shadow: 1px 1px #fff; }
.server-tools { height: 26px; flex: none; display: flex; align-items: center; color: #6d6d6d; padding-left: 3px; }
.gray-refresh { width: 18px; height: 18px; filter: grayscale(1) brightness(1.5); margin-right: 4px; }
.server-tools i { width: 1px; height: 23px; background: #8d8d8d; margin: 0 8px 0 7px; }
.stop { width: 11px; height: 11px; background: #bbb; border: 1px solid #a4a4a4; margin: 0 7px 0 12px; }
.server-tree { flex: 1; border-top: 1px solid #696969; background: #fff; padding: 2px 0 0 8px; font: 11px/16px "Liberation Sans", Arial, sans-serif; }
.srow { height: 16px; display: flex; }
.plus { width: 18px; height: 16px; }
.srow .node { margin: 0 4px 0 -1px; }

.work { flex: 1; min-width: 0; padding-left: 5px; }
.work-head { height: 25px; display: flex; align-items: center; padding: 0 9px 1px 5px; }
.work-head .arrow { margin-left: 5px; }
.work-head .x { margin-left: auto; }
.doc { height: 619px; border: 1px solid #696969; display: flex; flex-direction: column; padding: 0 2px 1px 0; }
.tabs { height: 24px; flex: none; display: flex; align-items: flex-end; font: 11.5px/18px "Liberation Sans", Arial, sans-serif; }
.tab { height: 20px; border: 1px solid #d9d9d9; border-left: 0; display: flex; align-items: center; flex: none; }
.tab svg { width: 16px; height: 16px; }
.tab.program { width: 75px; padding-left: 8px; gap: 6px; }
.tab.log { width: 52px; padding-left: 6px; gap: 6px; }
.tab.output { width: 111px; padding-left: 6px; gap: 5px; }
.tab.sas { width: 138px; height: 22px; padding: 0 0 1px 7px; gap: 6px; background: #fff; border-bottom-color: #fff; }
.tab.pdf { width: 95px; padding-left: 4px; gap: 6px; }
.tab-rest { flex: 1; border-bottom: 1px solid #d9d9d9; }
.panel { flex: 1; min-height: 0; background: #fff; border: 1px solid #dcdcdc; border-top: 0; border-left: 0; padding: 0 3px 3px 4px; display: flex; flex-direction: column; }
.panel-tools { height: 26px; flex: none; display: flex; align-items: center; padding-left: 2px; }
.p-refresh { width: 16px; height: 16px; margin-right: 3px; }
.psep { width: 1px; height: 15px; background: #999; margin: 0 7px 0 8px; }
.panel-tools .arrow { margin: 0 9px 0 5px; }
.off { color: #838383; }
.p-props { width: 12px; height: 15px; margin-right: 5px; }
.viewer { flex: 1; min-height: 0; display: flex; border: 1px solid #a0a0a0; border-right-color: #e3e3e3; border-bottom-color: #e3e3e3; box-shadow: inset 1px 1px #696969; padding: 1px 0 0 1px; }
.report { flex: 1; min-width: 0; overflow: hidden; background: #fafbfe; padding: 0 12px; font: 13.4px/16px "Liberation Sans", Arial, sans-serif; }
.vscroll { width: 16px; flex: none; background: #f0f0f0; border-left: 1px solid #fff; display: flex; flex-direction: column; align-items: center; padding: 6px 0 4px; }
.vscroll svg { width: 9px; height: 8px; }
.vscroll .thumb { width: 15px; height: 17px; margin-top: 75px; background: #cdcdcd; }
.vscroll .down { margin-top: auto; }
.remnant { width: 800px; height: 13px; margin-left: 128px; background: #fff; }
.remnant div { width: 234px; height: 7px; border: 1px solid #c9c9c9; border-top: 0; }
.created { height: 36px; display: flex; align-items: center; justify-content: flex-end; color: #112277; padding: 1px 1px 0 0; }
.day { margin-left: 17px; }
.april { margin: 0 5px 0 4px; transform: translateY(-1px); }
.break { height: 10px; display: flex; align-items: center; gap: 2px; font-size: 11px; line-height: 10px; }
.break span { margin-left: 1px; }
.break::before, .break::after { content: ""; flex: 1; height: 1px; margin-top: -1px; background: repeating-linear-gradient(90deg, #999 0 1px, transparent 1px 2px); }
.break.second { margin-top: 4px; }
h1, h2, h3 { margin: 0; text-align: center; color: #112277; }
h1 { height: 28px; font-size: 16px; line-height: 30px; }
h1.first { margin-top: 4px; }
h2 { margin-top: 4px; height: 18px; font-size: 13.3px; line-height: 20px; }
table { border-collapse: collapse; table-layout: fixed; margin-top: 25px; }
th, td { height: 17px; line-height: 16px; padding: 0 2px; border: 1px solid #b0b7bb; white-space: nowrap; overflow: hidden; }
.fit { vertical-align: top; }
.low th, .low td { line-height: 14px; padding-top: 2px; }
th { background: #edf2f9; color: #112277; text-align: left; }
td { background: #fff; }
.vars { width: 1057px; }
.c-head { width: 117px; }
.tall th, .tall td { height: 33px; }
.tall th { padding-top: 2px; }
.tall td { vertical-align: top; }
.eight { display: inline-block; width: 31px; }
.var-grid { display: grid; grid-template-columns: 146px 138px 128px 129px 129px 126px 1fr; grid-auto-rows: 15px; height: 32px; line-height: 15px; }
.stats { width: 526px; margin: 10px 0 0 265px; }
.w163 { width: 163px; } .w21 { width: 21px; } .w68 { width: 68px; } .w63 { width: 63px; } .w71 { width: 71px; }
.stats td { text-align: right; letter-spacing: -.22px; }
.stats .mid { text-align: center; }
.heads th + th { text-align: right; }
.plot { margin: 25px 0 0 208px; width: 640px; height: 80px; background: #fff; border: 1px solid #c8c8c8; }
h3 { height: 33px; padding-left: 68px; font-size: 14px; line-height: 38px; color: #000; }
.plot-area { margin: 0 10px 0 77px; height: 60px; border: 1px solid #8a8a8a; padding: 3px 0 0 79px; }
.plot-area svg { width: 8px; height: 8px; }

.status { height: 30px; flex: none; border-top: 1px solid #d7d7d7; display: flex; align-items: center; padding-left: 4px; }
.profile { margin-left: auto; margin-right: 17px; width: 129px; height: 26px; border: solid #8a8a8a; border-width: 0 1px; display: flex; align-items: center; padding-left: 4px; gap: 3px; color: #0000f0; }
.profile svg { width: 15px; height: 15px; }

.taskbar { height: 40px; flex: none; display: flex; color: #fff; background: linear-gradient(90deg, #20373f, #20343f 45%, #1c2c40 70%, #1a283d); }
.start { width: 48px; display: grid; place-items: center; }
.start svg { width: 16px; height: 16px; }
.type-here { width: 344px; background: #f2f2f2; border: 1px solid #bdbdbd; display: flex; align-items: center; padding-left: 11px; gap: 11px; color: #383838; font-size: 15px; line-height: 20px; }
.type-here svg { width: 17px; height: 17px; }
.round, .taskview { width: 48px; display: grid; place-items: center; }
.round svg { width: 18px; height: 18px; }
.taskview svg { width: 17px; height: 16px; }
.apps { display: flex; gap: 1px; margin-left: 3px; }
.app { width: 48px; height: 40px; display: flex; flex-direction: column; align-items: center; padding-top: 8px; justify-content: space-between; }
.app svg { width: 24px; height: 24px; }
.app.open::after { content: ""; width: 40px; height: 2px; background: #76b9ed; }
.app.current { background: #4b5965; }
.app.current::after { content: ""; width: 48px; height: 2px; background: #76b9ed; }
.app.alert { background: #a96832; }
.app.alert::after { content: ""; width: 48px; height: 2px; background: #ff7a00; }
.tray { margin-left: auto; display: flex; align-items: center; }
.chev { width: 12px; height: 8px; }
.batt { width: 17px; height: 14px; margin-left: 10px; }
.wifi { width: 13px; height: 13px; margin-left: 10px; }
.vol { width: 17px; height: 14px; margin-left: 8px; }
.clock { width: 72px; display: flex; flex-direction: column; align-items: center; line-height: 18px; }
.notice { position: relative; width: 17px; height: 16px; margin-left: 7px; }
.notice svg { width: 17px; height: 16px; }
.badge { position: absolute; left: 7px; top: 7px; width: 17px; height: 17px; border: 1px solid #8a949c; border-radius: 50%; background: #30383f; text-align: center; font-size: 12px; line-height: 15px; }
.show-desktop { width: 1px; height: 40px; background: #57636f; margin: 0 4px 0 19px; }
</style>
